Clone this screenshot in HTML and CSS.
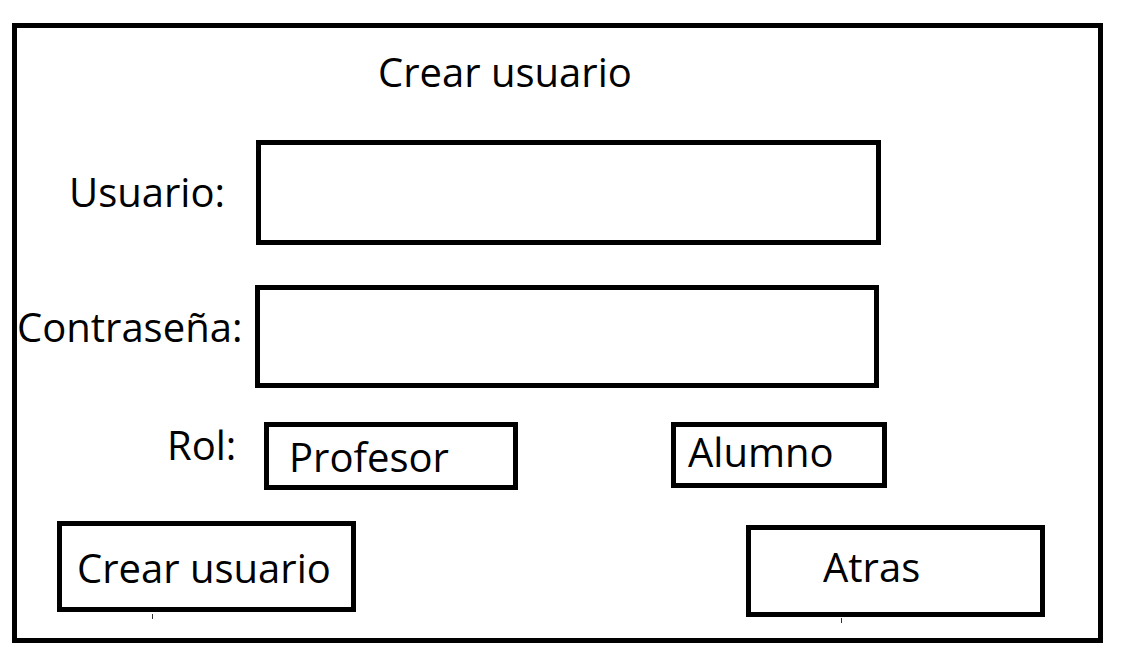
FILE: index.html
```html
<!DOCTYPE html>
<html lang="es">
<head>
  <meta charset="UTF-8" />
  <meta name="viewport" content="width=device-width, initial-scale=1.0"/>
  <title>Crear usuario</title>
  <link rel="stylesheet" href="styles.css">
</head>
<body>

  <div class="frame">
    <h1 class="title">Crear usuario</h1>

    <div class="row row-user">
      <label class="label" for="usuario">Usuario:</label>
      <input class="field" id="usuario" type="text">
    </div>

    <div class="row row-pass">
      <label class="label" for="contrasena">Contraseña:</label>
      <input class="field" id="contrasena" type="password">
    </div>

    <div class="row row-rol">
      <span class="label">Rol:</span>
      <div class="option option-profesor">Profesor</div>
      <div class="option option-alumno">Alumno</div>
    </div>

    <div class="row row-actions">
      <button class="btn btn-create">Crear usuario</button>
      <button class="btn btn-back">Atras</button>
    </div>
  </div>

</body>
</html>
```

FILE: styles.css
```css
* {
  box-sizing: border-box;
}

body {
  margin: 0;
  padding: 0;
  background-color: #fff;
  font-family: 'Open Sans', 'Noto Sans', sans-serif;
  font-size: 40px;
  line-height: 53px;
  color: #000;
}

.frame {
  width: 1091px;
  height: 620px;
  margin: 23px 0 0 12px;
  border: 5px solid #000;
}

.title {
  margin: 17px 0 0 361px;
  font-size: 40px;
  font-weight: 400;
  line-height: 53px;
}

.row {
  display: flex;
  align-items: flex-start;
}

.label {
  white-space: nowrap;
}

.field {
  border: 5px solid #000;
  background-color: #fff;
  padding: 0;
  outline: none;
  font: inherit;
}

/* usuario */
.row-user {
  margin-top: 42px;
}

.row-user .label {
  width: 187px;
  margin: 25px 0 0 52px;
}

.row-user .field {
  width: 625px;
  height: 105px;
}

/* contraseña */
.row-pass {
  margin-top: 40px;
}

.row-pass .label {
  width: 238px;
  margin-top: 15px;
}

.row-pass .field {
  width: 624px;
  height: 103px;
}

/* rol */
.row-rol {
  margin-top: 30px;
}

.row-rol .label {
  width: 99px;
  margin-left: 150px;
}

.option {
  margin-top: 4px;
  border: 5px solid #000;
}

.option-profesor {
  width: 254px;
  height: 68px;
  margin-left: -2px;
  padding: 3px 0 0 20px;
}

.option-alumno {
  width: 216px;
  height: 66px;
  margin-left: 153px;
  padding-left: 12px;
  line-height: 50px;
}

/* botones */
.row-actions {
  margin-top: 31px;
}

.btn {
  position: relative;
  display: block;
  width: 299px;
  border: 5px solid #000;
  background-color: #fff;
  font: inherit;
  color: #000;
  text-align: left;
  cursor: pointer;
}

.btn::after {
  content: "";
  position: absolute;
  left: 90px;
  top: 88px;
  width: 1px;
  height: 5px;
  background-color: #333;
}

.btn-create {
  height: 91px;
  margin-left: 40px;
  padding: 15px 0 13px 15px;
}

.btn-back {
  height: 92px;
  margin: 4px 0 0 390px;
  padding: 10px 0 19px 72px;
}
```
